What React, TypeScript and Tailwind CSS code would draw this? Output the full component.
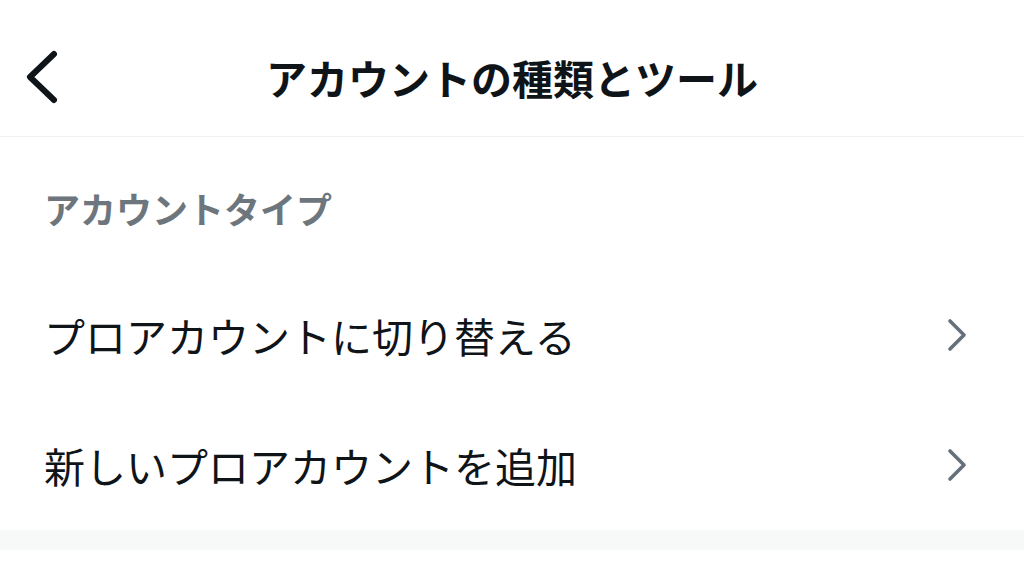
import React from "react";

const font = {
  fontFamily: '"Noto Sans CJK JP", "Noto Sans", sans-serif',
};

const ChevronRight = () => (
  <svg width="28" height="40" viewBox="0 0 28 40" fill="none">
    <path
      d="M6 6 L20 20 L6 34"
      stroke="#66707a"
      strokeWidth="3.6"
      strokeLinecap="round"
      strokeLinejoin="round"
    />
  </svg>
);

const Row = ({ label }: { label: string }) => (
  <div className="flex h-[130px] items-center justify-between pl-[44px] pr-[52px]">
    <span className="text-[41px] leading-none text-[#0f1419]">{label}</span>
    <ChevronRight />
  </div>
);

export default function App() {
  return (
    <div className="w-[1024px] h-[564px] overflow-hidden bg-white" style={font}>
      <div className="relative flex h-[137px] items-center justify-center border-b border-[#eff3f4] pt-[18px]">
        <button className="absolute left-[18px] top-[47px]">
          <svg width="44" height="60" viewBox="0 0 44 60" fill="none">
            <path
              d="M36 7 L12 30 L36 53"
              stroke="#0f1419"
              strokeWidth="6"
              strokeLinecap="round"
              strokeLinejoin="round"
            />
          </svg>
        </button>
        <h1 className="text-[41px] font-bold leading-none text-[#0f1419]">
          アカウントの種類とツール
        </h1>
      </div>
      <div className="flex h-[133px] items-center pl-[44px] pt-[8px]">
        <span className="text-[36px] font-bold leading-none text-[#6e767d]">
          アカウントタイプ
        </span>
      </div>
      <Row label="プロアカウントに切り替える" />
      <Row label="新しいプロアカウントを追加" />
      <div className="h-[20px] bg-[#f7f9f9]" />
    </div>
  );
}
